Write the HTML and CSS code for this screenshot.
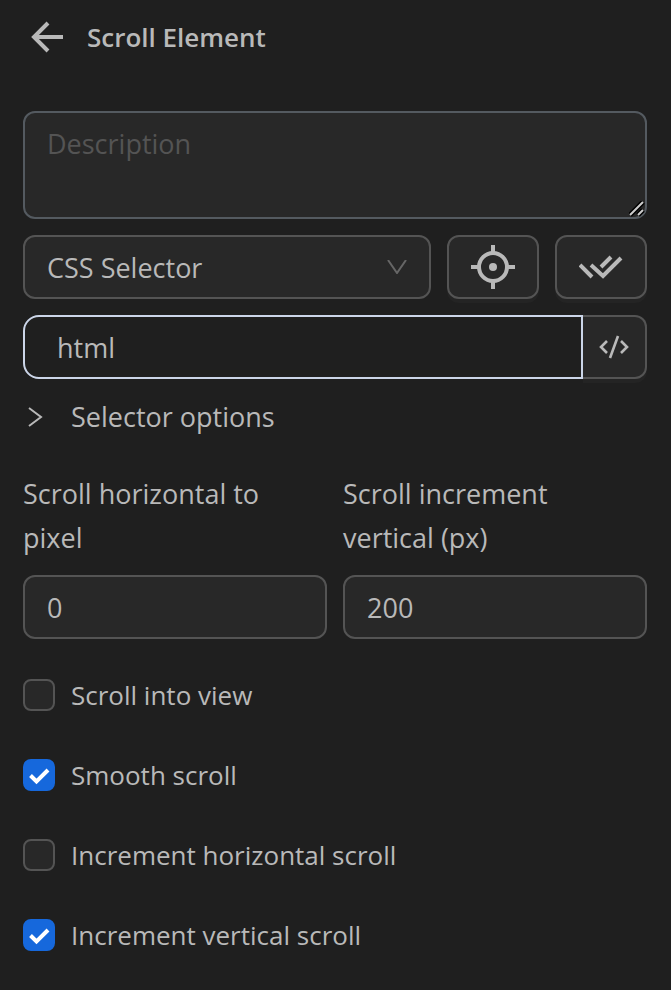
FILE: index.html
```html
<!DOCTYPE html>
<html lang="en">

    <head>
        <meta charset="utf-8">
        <meta name="viewport" content="width=device-width, initial-scale=1">
        <title>Scroll Element</title>
        <link rel="stylesheet" href="styles.css">
    </head>

    <body>
        <header class="header">
            <button class="back" type="button" aria-label="Back">
                <svg width="32" height="32" viewBox="0 0 32 32" fill="none" stroke="currentColor" stroke-width="4">
                    <path d="M32 16H3M17 2L3 16L17 30" />
                </svg>
            </button>
            <h1>Scroll Element</h1>
        </header>

        <form class="form">
            <div class="description">
                <textarea class="field" aria-label="Description" placeholder="Description"></textarea>
                <svg class="grip" width="16" height="16" viewBox="0 0 16 16" fill="none">
                    <path d="M1 14L14 1M9 14L14 9" stroke="#000" stroke-width="5" />
                    <path d="M1 14L14 1M9 14L14 9" stroke="#ccc" stroke-width="2" />
                </svg>
            </div>

            <div class="row">
                <div class="select">
                    <select class="field" aria-label="Selector type">
                        <option>CSS Selector</option>
                        <option>XPath</option>
                    </select>
                    <svg class="chevron" width="20" height="14" viewBox="0 0 20 14" fill="none" stroke="currentColor" stroke-width="2">
                        <path d="M1 0L10 13L19 0" />
                    </svg>
                </div>
                <button class="field icon-button" type="button" aria-label="Pick element">
                    <svg width="44" height="44" viewBox="0 0 44 44" fill="none" stroke="currentColor" stroke-width="4">
                        <circle cx="22" cy="22" r="14" />
                        <path d="M22 0V8M22 36V44M0 22H8M36 22H44" />
                        <circle cx="22" cy="22" r="4" fill="currentColor" stroke="none" />
                    </svg>
                </button>
                <button class="field icon-button" type="button" aria-label="Verify selector">
                    <svg width="44" height="24" viewBox="0 0 44 24" fill="none" stroke="currentColor" stroke-width="4">
                        <path d="M1 10L13 22M12 10L24 21L42 3M22 12L32 2" />
                    </svg>
                </button>
            </div>

            <div class="group">
                <input class="field selector" type="text" aria-label="Selector" value="html">
                <button class="field code" type="button" aria-label="Edit as code">
                    <svg width="30" height="24" viewBox="0 0 30 24" fill="none" stroke="currentColor" stroke-width="2.6">
                        <path d="M8 6L2 12L8 18M22 6L28 12L22 18M19 1L11 23" />
                    </svg>
                </button>
            </div>

            <details class="options">
                <summary>
                    <svg width="16" height="20" viewBox="0 0 16 20" fill="none" stroke="currentColor" stroke-width="2">
                        <path d="M2 1L14 10L2 19" />
                    </svg>
                    Selector options
                </summary>
            </details>

            <div class="columns">
                <div class="item">
                    <label for="scroll-x">Scroll horizontal to pixel</label>
                    <input class="field" id="scroll-x" type="text" value="0">
                </div>
                <div class="item">
                    <label for="scroll-y">Scroll increment vertical (px)</label>
                    <input class="field" id="scroll-y" type="text" value="200">
                </div>
            </div>

            <div class="checks">
                <label class="check"><input type="checkbox">Scroll into view</label>
                <label class="check"><input type="checkbox" checked>Smooth scroll</label>
                <label class="check"><input type="checkbox">Increment horizontal scroll</label>
                <label class="check"><input type="checkbox" checked>Increment vertical scroll</label>
            </div>
        </form>
    </body>

</html>
```

FILE: styles.css
```css
:root {
    --bg: #1f1f1f;
    --field-bg: #282828;
    --border: #545454;
    --fg: #b9b9b9;
    --muted: #545454;
    --focus: #cbd5e8;
    --primary: #1668dc;
}

* {
    box-sizing: border-box;
}

body {
    margin: 0;
    padding: 0 24px 32px 23px;
    background: var(--bg);
    color: var(--fg);
    font: 27px/44px "Segoe UI", "Open Sans", sans-serif;
}

svg {
    display: block;
    flex: none;
}

button,
input,
select,
textarea {
    font: inherit;
    color: inherit;
}

.header {
    display: flex;
    align-items: center;
    gap: 24px;
    height: 74px;
    padding-left: 8px;

    & h1 {
        margin: 0;
        font-size: 26px;
        font-weight: 600;
    }
}

.back {
    padding: 0;
    border: 0;
    background: none;
}

.form {
    display: flex;
    flex-direction: column;
    gap: 16px;
    margin-top: 37px;
}

.field {
    display: block;
    width: 100%;
    height: 64px;
    padding: 0 22px;
    border: 2px solid var(--border);
    border-radius: 12px;
    background: var(--field-bg);
    outline: 0;
}

.description {
    position: relative;

    & textarea {
        height: 108px;
        padding: 9px 22px;
        border-color: #545a60;
        resize: none;
    }

    & ::placeholder {
        color: var(--muted);
    }
}

.grip {
    position: absolute;
    right: 2px;
    bottom: 2px;
}

.row {
    display: flex;
    gap: 16px;
}

.select {
    position: relative;
    flex: 1;

    & select {
        padding-top: 2px;
        appearance: none;
    }
}

.chevron {
    position: absolute;
    top: 25px;
    right: 24px;
    color: #666;
    pointer-events: none;
}

.icon-button {
    display: grid;
    place-items: center;
    width: 92px;
    padding: 0;
    box-shadow: 0 4px 0 #242424;
}

.group {
    display: flex;

    & .selector {
        flex: 1;
        min-width: 0;
        padding: 0 32px;
        border-color: var(--focus);
        border-radius: 16px 0 0 16px;
        background: var(--bg);
    }

    & .code {
        display: grid;
        place-items: center;
        width: 64px;
        padding: 0;
        border-left: 0;
        border-radius: 0 12px 12px 0;
        box-shadow: 0 4px 0 #242424;
    }
}

.options summary {
    display: flex;
    align-items: center;
    gap: 28px;
    padding: 0 4px;
    list-style: none;
}

.columns {
    display: grid;
    grid-template-columns: 1fr 1fr;
    gap: 16px;
    margin-top: 17px;
}

.item {
    display: flex;
    flex-direction: column;
    justify-content: space-between;
    gap: 15px;

    & label {
        max-width: 256px;
    }
}

.checks {
    display: flex;
    flex-direction: column;
    gap: 36px;
    margin-top: 18px;
    font-size: 26px;
}

.check {
    display: flex;
    align-items: center;
    gap: 16px;

    & input {
        appearance: none;
        flex: none;
        width: 32px;
        height: 32px;
        margin: 0;
        border: 2px solid var(--border);
        border-radius: 8px;
        background: var(--field-bg);
    }

    & input:checked {
        border-color: var(--primary);
        background: var(--primary) url("data:image/svg+xml,%3Csvg xmlns='http://www.w3.org/2000/svg' viewBox='0 0 32 32'%3E%3Cpath d='M7.5 16.5L13.5 22.5L25 11' fill='none' stroke='white' stroke-width='4'/%3E%3C/svg%3E") border-box center / 32px;
    }
}
```
